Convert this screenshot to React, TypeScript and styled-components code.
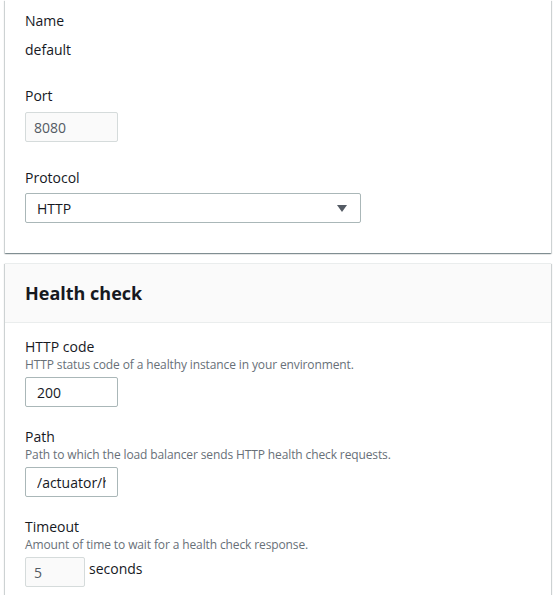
import React from 'react';
import styled, { createGlobalStyle } from 'styled-components';

const COLORS = {
  text: '#16191f',
  muted: '#687078',
  readonly: '#545b64',
  border: '#aab7b8',
  light: '#d5dbdb',
  divider: '#eaeded',
  header: '#fafafa',
};

const GlobalStyle = createGlobalStyle`
  body {
    margin: 0;
    background: #ffffff;
    font-family: "Open Sans", "Noto Sans", Arial, sans-serif;
    color: ${COLORS.text};
  }
`;

const Page = styled.main`
  display: flex;
  flex-direction: column;
  gap: 10px;
  padding: 0 2px 0 5px;
`;

const Panel = styled.section<{ $clipped?: boolean }>`
  background: #ffffff;
  border-top: ${(p) => (p.$clipped ? 'none' : `1px solid ${COLORS.divider}`)};
  box-shadow:
    0 1px 1px 0 rgba(0, 28, 36, 0.3),
    1px 1px 1px 0 rgba(0, 28, 36, 0.15),
    -1px 1px 1px 0 rgba(0, 28, 36, 0.15);
`;

const PanelHeader = styled.header`
  background: ${COLORS.header};
  border-bottom: 1px solid ${COLORS.divider};
  padding: 0 20px;
  height: 58px;
  display: flex;
  align-items: center;
`;

const Title = styled.h2`
  margin: 0;
  font-size: 18px;
  font-weight: 700;
  line-height: 22px;
`;

const PanelBody = styled.div<{ $top: number; $bottom: number }>`
  display: flex;
  flex-direction: column;
  gap: 20px;
  padding: ${(p) => p.$top}px 20px ${(p) => p.$bottom}px;
`;

const Field = styled.div<{ $offset?: number }>`
  display: flex;
  flex-direction: column;
  margin-top: ${(p) => p.$offset ?? 0}px;
`;

const Label = styled.label`
  font-size: 14px;
  line-height: 20px;
  font-weight: 400;
`;

const Hint = styled.span`
  font-size: 12px;
  line-height: 16px;
  letter-spacing: -0.12px;
  color: ${COLORS.muted};
`;

const Value = styled.span`
  font-size: 14px;
  line-height: 20px;
  margin-top: 9px;
`;

const Control = styled.div<{ $gap: number }>`
  display: flex;
  align-items: center;
  gap: 4px;
  margin-top: ${(p) => p.$gap}px;
`;

const Input = styled.input<{ $readonly?: boolean; $width: number }>`
  box-sizing: border-box;
  width: ${(p) => p.$width}px;
  height: 30px;
  padding: 0 ${(p) => (p.$readonly ? 8 : 11)}px;
  border: 1px solid ${(p) => (p.$readonly ? COLORS.light : COLORS.border)};
  border-radius: 2px;
  background: ${(p) => (p.$readonly ? COLORS.header : '#ffffff')};
  color: ${(p) => (p.$readonly ? COLORS.readonly : COLORS.text)};
  font-family: inherit;
  font-size: 14px;
  outline: none;
`;

const Select = styled.div`
  box-sizing: border-box;
  width: 336px;
  height: 30px;
  padding: 0 12px 0 11px;
  border: 1px solid ${COLORS.border};
  border-radius: 2px;
  display: flex;
  align-items: center;
  justify-content: space-between;
  font-size: 14px;
`;

const Unit = styled.span`
  font-size: 14px;
  line-height: 20px;
  margin-top: -6px;
`;

const Caret = () => (
  <svg width="12" height="9" viewBox="0 0 12 9" aria-hidden>
    <path d="M1 1h10L6 8z" fill="#545b64" />
  </svg>
);

export default function App() {
  return (
    <>
      <GlobalStyle />
      <Page>
        <Panel $clipped>
          <PanelBody $top={11} $bottom={30}>
            <Field>
              <Label>Name</Label>
              <Value>default</Value>
            </Field>
            <Field $offset={6}>
              <Label>Port</Label>
              <Control $gap={6}>
                <Input $readonly $width={93} defaultValue="8080" readOnly />
              </Control>
            </Field>
            <Field $offset={6}>
              <Label>Protocol</Label>
              <Control $gap={5}>
                <Select>
                  <span>HTTP</span>
                  <Caret />
                </Select>
              </Control>
            </Field>
          </PanelBody>
        </Panel>
        <Panel>
          <PanelHeader>
            <Title>Health check</Title>
          </PanelHeader>
          <PanelBody $top={14} $bottom={20}>
            <Field>
              <Label>HTTP code</Label>
              <Hint>HTTP status code of a healthy instance in your environment.</Hint>
              <Control $gap={4}>
                <Input $width={93} defaultValue="200" />
              </Control>
            </Field>
            <Field>
              <Label>Path</Label>
              <Hint>Path to which the load balancer sends HTTP health check requests.</Hint>
              <Control $gap={4}>
                <Input $width={93} defaultValue="/actuator/health" />
              </Control>
            </Field>
            <Field>
              <Label>Timeout</Label>
              <Hint>Amount of time to wait for a health check response.</Hint>
              <Control $gap={4}>
                <Input $readonly $width={60} defaultValue="5" readOnly />
                <Unit>seconds</Unit>
              </Control>
            </Field>
          </PanelBody>
        </Panel>
      </Page>
    </>
  );
}
